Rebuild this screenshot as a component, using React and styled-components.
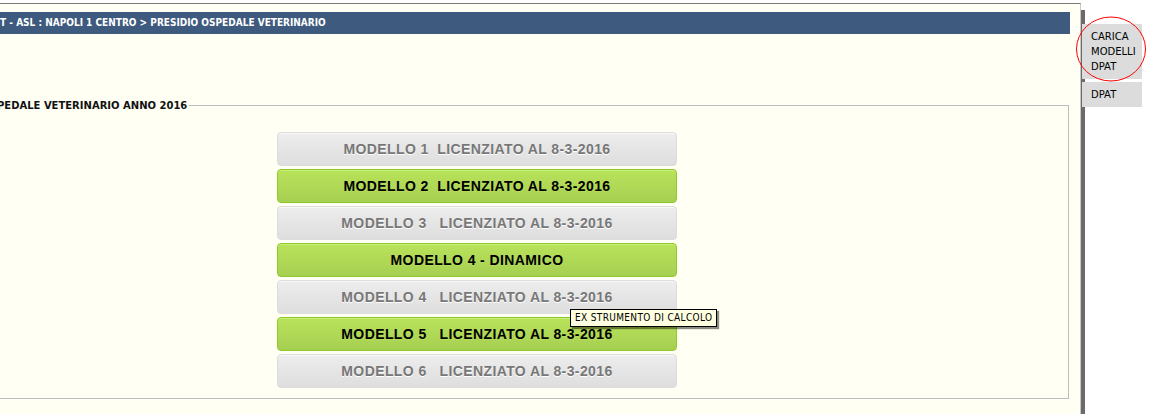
import React from 'react';
import styled, { createGlobalStyle } from 'styled-components';

const GlobalStyle = createGlobalStyle`
    html, body{
        margin:0;
        padding:0;
        background:#fff;
        font-family:"DejaVu Sans", Verdana, sans-serif;
    }
`;

const Page = styled.div`
    position:relative;
    display:flex;
    height:414px;
    overflow:hidden;
`;

const MainPanel = styled.div`
    width:1080px;
    margin-top:3px;
    border-top:1px solid #777;
    border-right:1px solid #c8c8c8;
    background:#fffff3;
    display:flex;
    flex-direction:column;
`;

const Header = styled.div`
    margin-top:8px;
    width:1070px;
    height:22px;
    background:#3e5a7e;
    color:#fff;
    font-family:"DejaVu Sans Condensed", "DejaVu Sans", sans-serif;
    font-weight:bold;
    font-size:10px;
    line-height:22px;
    white-space:nowrap;
    overflow:hidden;
`;

const Fieldset = styled.fieldset`
    margin:66px 0 0 -4px;
    width:1073px;
    height:299px;
    box-sizing:border-box;
    padding:0;
    border:1px solid #bdbdbd;
`;

const Legend = styled.legend`
    padding:0 2px 0 0;
    margin-left:0;
    font-family:"DejaVu Sans", sans-serif;
    font-weight:bold;
    font-size:10px;
    color:#111;
    white-space:nowrap;
`;

const ButtonList = styled.div`
    margin:21px 0 0 280px;
    width:400px;
    display:flex;
    flex-direction:column;
    gap:3px;
`;

const ModelButton = styled.div`
    height:32px;
    border-radius:4px;
    border:1px solid ${p => p.active ? '#8ccb2c' : '#dcdcdc'};
    background:${p => p.active
        ? 'linear-gradient(#b9e35a, #a6cf52)'
        : 'linear-gradient(#ededed, #dedede)'};
    box-shadow:inset 0 1px 0 ${p => p.active ? '#c9ee78' : '#f8f8f8'};
    color:${p => p.active ? '#000' : '#777'};
    text-shadow:${p => p.active ? '0 1px 0 #b4dc58' : '0 1px 0 #fff'};
    font-family:"Liberation Sans", Arial, sans-serif;
    font-weight:bold;
    font-size:14px;
    letter-spacing:0.4px;
    line-height:32px;
    text-align:center;
    white-space:pre;
`;

const Sidebar = styled.div`
    margin-top:10px;
    border-left:4px solid #6b6b6b;
    display:flex;
    flex-direction:column;
    gap:3px;
`;

const SideButton = styled.div`
    margin-left:-3px;
    width:51px;
    padding:5px 0 5px 9px;
    background:#dcdcdc;
    font-family:"DejaVu Sans", Tahoma, sans-serif;
    font-size:10px;
    line-height:15px;
    color:#000;
    &:first-child{ margin-top:14px; }
`;

const Tooltip = styled.div`
    position:absolute;
    left:570px;
    top:309px;
    padding:0 4px;
    height:16px;
    line-height:16px;
    background:#ffffe1;
    border:1px solid #000;
    box-shadow:2px 2px 1px rgba(0,0,0,.45);
    font-family:"DejaVu Sans Condensed", "DejaVu Sans", sans-serif;
    font-size:10px;
    letter-spacing:0.35px;
    color:#000;
    white-space:nowrap;
`;

const Circle = styled.svg`
    position:absolute;
    left:1075px;
    top:16px;
    pointer-events:none;
`;

const models = [
    { label: 'MODELLO 1  LICENZIATO AL 8-3-2016' },
    { label: 'MODELLO 2  LICENZIATO AL 8-3-2016', active: true },
    { label: 'MODELLO 3   LICENZIATO AL 8-3-2016' },
    { label: 'MODELLO 4 - DINAMICO', active: true },
    { label: 'MODELLO 4   LICENZIATO AL 8-3-2016' },
    { label: 'MODELLO 5   LICENZIATO AL 8-3-2016', active: true },
    { label: 'MODELLO 6   LICENZIATO AL 8-3-2016' },
];

const App = () => {
    return (
        <Page>
            <GlobalStyle />
            <MainPanel>
                <Header>T - ASL : NAPOLI 1 CENTRO &gt; PRESIDIO OSPEDALE VETERINARIO</Header>
                <Fieldset>
                    <Legend>PEDALE VETERINARIO ANNO 2016</Legend>
                    <ButtonList>
                        {models.map((m, i) => (
                            <ModelButton key={i} active={m.active}>{m.label}</ModelButton>
                        ))}
                    </ButtonList>
                </Fieldset>
            </MainPanel>
            <Sidebar>
                <SideButton>CARICA<br />MODELLI<br />DPAT</SideButton>
                <SideButton>DPAT</SideButton>
            </Sidebar>
            <Tooltip>EX STRUMENTO DI CALCOLO</Tooltip>
            <Circle width="72" height="68" viewBox="0 0 72 68">
                <ellipse cx="36" cy="33" rx="34.5" ry="32" fill="none" stroke="#f00" strokeWidth="1" />
            </Circle>
        </Page>
    );
}

export default App;
